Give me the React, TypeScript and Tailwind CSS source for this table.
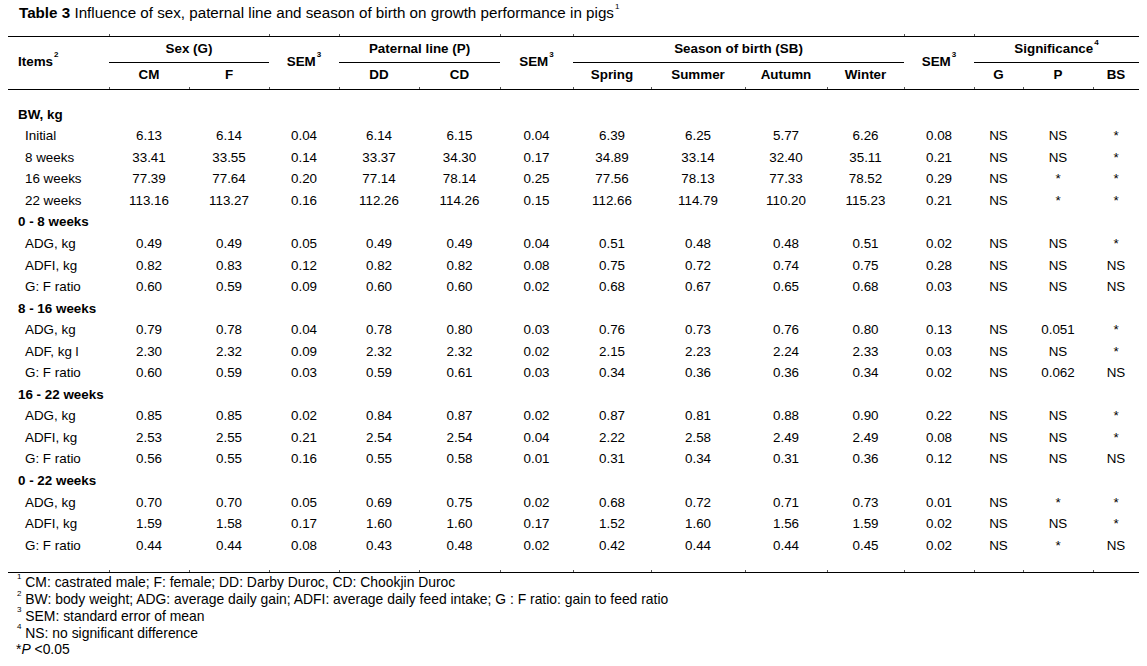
import React from "react";

const COLS = "grid grid-cols-[101px_80px_80px_70px_80px_81px_73px_78px_94px_82px_77px_70px_49px_70px_46px]";

type DataRow = { label: string; v?: string[] };

const rows: DataRow[] = [
  { label: "BW, kg" },
  { label: "Initial", v: ["6.13", "6.14", "0.04", "6.14", "6.15", "0.04", "6.39", "6.25", "5.77", "6.26", "0.08", "NS", "NS", "*"] },
  { label: "8 weeks", v: ["33.41", "33.55", "0.14", "33.37", "34.30", "0.17", "34.89", "33.14", "32.40", "35.11", "0.21", "NS", "NS", "*"] },
  { label: "16 weeks", v: ["77.39", "77.64", "0.20", "77.14", "78.14", "0.25", "77.56", "78.13", "77.33", "78.52", "0.29", "NS", "*", "*"] },
  { label: "22 weeks", v: ["113.16", "113.27", "0.16", "112.26", "114.26", "0.15", "112.66", "114.79", "110.20", "115.23", "0.21", "NS", "*", "*"] },
  { label: "0 - 8 weeks" },
  { label: "ADG, kg", v: ["0.49", "0.49", "0.05", "0.49", "0.49", "0.04", "0.51", "0.48", "0.48", "0.51", "0.02", "NS", "NS", "*"] },
  { label: "ADFI, kg", v: ["0.82", "0.83", "0.12", "0.82", "0.82", "0.08", "0.75", "0.72", "0.74", "0.75", "0.28", "NS", "NS", "NS"] },
  { label: "G: F ratio", v: ["0.60", "0.59", "0.09", "0.60", "0.60", "0.02", "0.68", "0.67", "0.65", "0.68", "0.03", "NS", "NS", "NS"] },
  { label: "8 - 16 weeks" },
  { label: "ADG, kg", v: ["0.79", "0.78", "0.04", "0.78", "0.80", "0.03", "0.76", "0.73", "0.76", "0.80", "0.13", "NS", "0.051", "*"] },
  { label: "ADF, kg l", v: ["2.30", "2.32", "0.09", "2.32", "2.32", "0.02", "2.15", "2.23", "2.24", "2.33", "0.03", "NS", "NS", "*"] },
  { label: "G: F ratio", v: ["0.60", "0.59", "0.03", "0.59", "0.61", "0.03", "0.34", "0.36", "0.36", "0.34", "0.02", "NS", "0.062", "NS"] },
  { label: "16 - 22 weeks" },
  { label: "ADG, kg", v: ["0.85", "0.85", "0.02", "0.84", "0.87", "0.02", "0.87", "0.81", "0.88", "0.90", "0.22", "NS", "NS", "*"] },
  { label: "ADFI, kg", v: ["2.53", "2.55", "0.21", "2.54", "2.54", "0.04", "2.22", "2.58", "2.49", "2.49", "0.08", "NS", "NS", "*"] },
  { label: "G: F ratio", v: ["0.56", "0.55", "0.16", "0.55", "0.58", "0.01", "0.31", "0.34", "0.31", "0.36", "0.12", "NS", "NS", "NS"] },
  { label: "0 - 22 weeks" },
  { label: "ADG, kg", v: ["0.70", "0.70", "0.05", "0.69", "0.75", "0.02", "0.68", "0.72", "0.71", "0.73", "0.01", "NS", "*", "*"] },
  { label: "ADFI, kg", v: ["1.59", "1.58", "0.17", "1.60", "1.60", "0.17", "1.52", "1.60", "1.56", "1.59", "0.02", "NS", "NS", "*"] },
  { label: "G: F ratio", v: ["0.44", "0.44", "0.08", "0.43", "0.48", "0.02", "0.42", "0.44", "0.44", "0.45", "0.02", "NS", "*", "NS"] },
];

function Ticks({ at }: { at: number[] }) {
  // a 2px row of tiny tick marks sitting on top of a rule
  return (
    <div className={`${COLS} h-[2px]`}>
      {Array.from({ length: 15 }).map((_, i) => (
        <div key={i} className={at.includes(i) ? "border-l border-[#555]" : ""} />
      ))}
    </div>
  );
}

function Sup({ n }: { n: string }) {
  return <sup className="text-[8px] relative -top-[3px] align-super leading-none ml-[1px]">{n}</sup>;
}

export default function App() {
  const allTicks = [1, 2, 3, 4, 5, 6, 7, 8, 9, 10, 11, 12, 13, 14];
  return (
    <div className="w-[1147px] h-[666px] bg-white text-black font-['Liberation_Sans',Arial,sans-serif] overflow-hidden">
      <div className="pl-[19px] pt-[4px] h-[34px] text-[15.2px] leading-[17px]">
        <span className="font-bold">Table 3</span> Influence of sex, paternal line and season of birth on growth performance in pigs
        <Sup n="1" />
      </div>

      <div className="ml-[8px] w-[1131px] text-[13.4px]">
        {/* header */}
        <div className="border-b border-black">
          <Ticks at={[1, 3, 4, 6, 7, 11, 12]} />
        </div>
        <div className={`${COLS} font-bold`}>
          <div className="row-span-2 flex items-center pl-[10px]">
            <span>
              Items<Sup n="2" />
            </span>
          </div>
          <div className="col-span-2 h-[26px] flex flex-col">
            <div className="flex-1 flex items-center justify-center">Sex (G)</div>
            <div className="border-b border-black" />
          </div>
          <div className="row-span-2 flex items-center justify-center">
            <span>
              SEM<Sup n="3" />
            </span>
          </div>
          <div className="col-span-2 h-[26px] flex flex-col">
            <div className="flex-1 flex items-center justify-center">Paternal line (P)</div>
            <div className="border-b border-black" />
          </div>
          <div className="row-span-2 flex items-center justify-center">
            <span>
              SEM<Sup n="3" />
            </span>
          </div>
          <div className="col-span-4 h-[26px] flex flex-col">
            <div className="flex-1 flex items-center justify-center">Season of birth (SB)</div>
            <div className="border-b border-black" />
          </div>
          <div className="row-span-2 flex items-center justify-center">
            <span>
              SEM<Sup n="3" />
            </span>
          </div>
          <div className="col-span-3 h-[26px] flex flex-col">
            <div className="flex-1 flex items-center justify-center">
              <span>
                Significance<Sup n="4" />
              </span>
            </div>
            <div className="border-b border-black" />
          </div>
          {["CM", "F", "DD", "CD", "Spring", "Summer", "Autumn", "Winter", "G", "P", "BS"].map((h, i) => (
            <div key={i} className="h-[24px] flex items-center justify-center">
              {h}
            </div>
          ))}
        </div>
        <div className="border-b border-black">
          <Ticks at={allTicks} />
        </div>

        {/* body */}
        <div className="pt-[14px] pb-[14px]">
          {rows.map((r, i) =>
            r.v ? (
              <div key={i} className={`${COLS} h-[21.55px] items-center`}>
                <div className="pl-[17px] whitespace-nowrap">{r.label}</div>
                {r.v.map((v, j) => (
                  <div key={j} className="text-center">
                    {v}
                  </div>
                ))}
              </div>
            ) : (
              <div key={i} className="h-[21.55px] flex items-center pl-[10px] font-bold">
                {r.label}
              </div>
            )
          )}
        </div>
        <div className="border-b border-black">
          <Ticks at={allTicks} />
        </div>
      </div>

      {/* footnotes */}
      <div className="pl-[16px] pt-[1px] text-[13.9px] leading-[16.75px] font-['Liberation_Sans',Arial,sans-serif]">
        <div>
          <Sup n="1" /> CM: castrated male; F: female; DD: Darby Duroc, CD: Chookjin Duroc
        </div>
        <div>
          <Sup n="2" /> BW: body weight; ADG: average daily gain; ADFI: average daily feed intake; G : F ratio: gain to feed ratio
        </div>
        <div>
          <Sup n="3" /> SEM: standard error of mean
        </div>
        <div>
          <Sup n="4" /> NS: no significant difference
        </div>
        <div>
          *<i>P</i> &lt;0.05
        </div>
      </div>
    </div>
  );
}
